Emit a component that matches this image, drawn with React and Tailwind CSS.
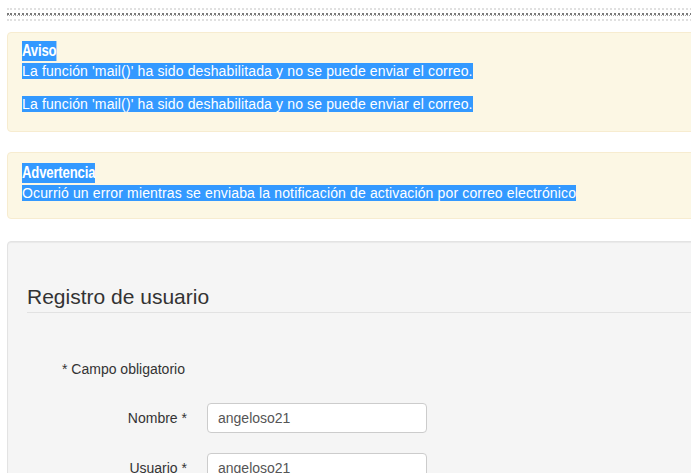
const sel = "bg-[#3399ff] text-white";

const Alert = ({ title, lines, className = "" }) => (
  <div
    className={`rounded-[4px] border border-[#f7ecd0] bg-[#fcf7e4] pl-[14px] pt-[8px] ${className}`}
  >
    <div className="leading-[20px]">
      <span
        className={`${sel} inline-block origin-left scale-x-[0.82] text-[16px] font-bold tracking-[-0.2px]`}
      >
        {title}
      </span>
    </div>
    {lines.map((line, i) => (
      <p key={i} className="mb-[13px] text-[14px] leading-[20px] tracking-[0.14px]">
        <span className={sel}>{line}</span>
      </p>
    ))}
  </div>
);

const Field = ({ label, value }) => (
  <div className="flex items-center h-[30px] mb-[20px]">
    <label className="w-[180px] pr-[20px] text-right text-[14px] text-[#333]">
      {label}
    </label>
    <input
      readOnly
      value={value}
      className="h-[30px] w-[220px] rounded-[4px] border border-[#cccccc] bg-white px-[10px] text-[14px] text-[#555] outline-none"
    />
  </div>
);

export default function App() {
  const mail = "La función 'mail()' ha sido deshabilitada y no se puede enviar el correo.";

  return (
    <div
      className="w-full h-[473px] overflow-hidden bg-white"
      style={{ fontFamily: '"Liberation Sans", Arial, sans-serif' }}
    >
      <div className="w-[740px] pl-[7px]">
        {/* dotted separator */}
        <div className="pt-[8px]">
          <div className="border-t-2 border-dotted border-[#e0e0e0]" />
          <div className="mt-[3px] border-t-2 border-dotted border-[#7a7a7a]" />
          <div className="border-t border-dotted border-[#a8a8a8]" />
          <div className="mt-[3px] border-t-2 border-dotted border-[#e0e0e0]" />
        </div>

        <Alert
          title="Aviso"
          lines={[mail, mail]}
          className="mt-[11px] h-[100px]"
        />
        <Alert
          title="Advertencia"
          lines={[
            "Ocurrió un error mientras se enviaba la notificación de activación por correo electrónico",
          ]}
          className="mt-[20px] h-[67px] pt-[10px]"
        />

        {/* registration well */}
        <div className="mt-[22px] rounded-tl-[4px] border border-[#e3e3e3] bg-[#f5f5f5] pl-[19px] pt-[40px] shadow-[inset_0_1px_1px_rgba(0,0,0,0.05)]">
          <div className="border-b border-[#e2e2e2] text-[21px] leading-[30px] text-[#333]">
            Registro de usuario
          </div>
          <div className="pl-[35px] pt-[46px] text-[14px] leading-[20px] text-[#333]">
            * Campo obligatorio
          </div>
          <div className="pt-[24px]">
            <Field label="Nombre *" value="angeloso21" />
            <Field label="Usuario *" value="angeloso21" />
          </div>
        </div>
      </div>
    </div>
  );
}
